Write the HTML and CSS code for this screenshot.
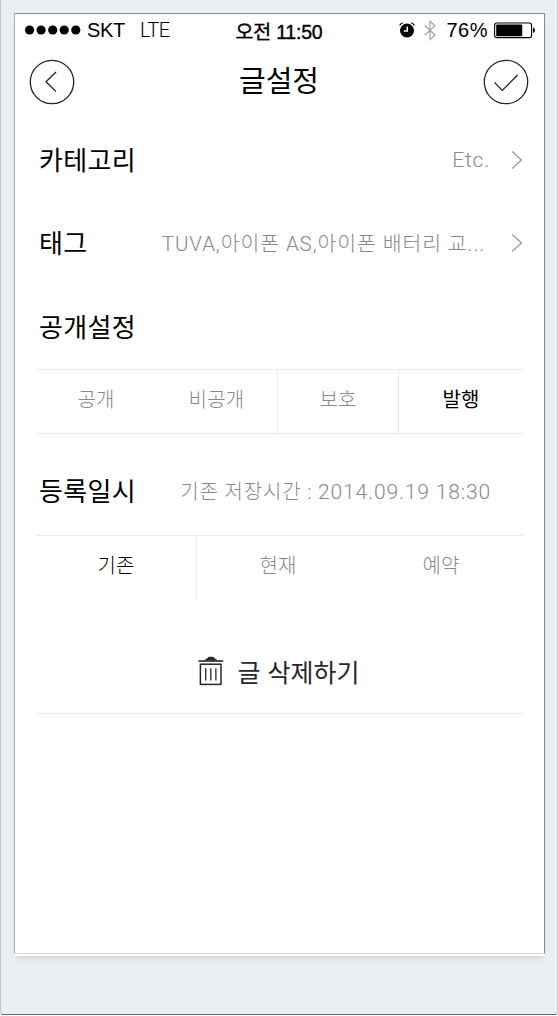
FILE: index.html
```
<!DOCTYPE html>
<html lang="ko">
<head>
    <meta charset="UTF-8">
    <meta name="viewport" content="width=device-width, initial-scale=1.0">
    <title>글설정</title>
    <link rel="stylesheet" href="styles.css">
</head>
<body>
    <div class="device">
        <div class="screen">
            <div class="status-bar">
                <div class="status-left">
                    <svg class="signal" width="56" height="10" viewBox="0 0 56 10">
                        <circle cx="4.6" cy="5" r="4.6"/>
                        <circle cx="16.1" cy="5" r="4.6"/>
                        <circle cx="27.7" cy="5" r="4.6"/>
                        <circle cx="39.2" cy="5" r="4.6"/>
                        <circle cx="50.8" cy="5" r="4.6"/>
                    </svg>
                    <span class="carrier">SKT</span>
                    <span class="network">LTE</span>
                </div>
                <div class="clock">오전 11:50</div>
                <div class="status-right">
                    <svg class="alarm" width="16" height="16" viewBox="0 0 16 16">
                        <circle cx="8" cy="8.6" r="7"/>
                        <path d="M0.6 3.6 Q1.6 1.6 3.8 0.8 M15.4 3.6 Q14.4 1.6 12.2 0.8" fill="none" stroke="#000" stroke-width="1.2"/>
                        <path d="M8.3 4.6 V9 H4.8" fill="none" stroke="#fff" stroke-width="1.5"/>
                    </svg>
                    <svg class="bluetooth" width="12" height="21" viewBox="0 0 12 21">
                        <path d="M0.7 5.5 L11 15 L6 19.6 V1.2 L11 5.8 L0.7 15.3" fill="none" stroke="#a5a5a5" stroke-width="1.2"/>
                    </svg>
                    <span class="percent">76%</span>
                    <svg class="battery" width="42" height="17" viewBox="0 0 42 17">
                        <rect x="0.6" y="1" width="37" height="14.6" rx="2.4" fill="#fff" stroke="#000" stroke-width="1.1"/>
                        <rect x="2.2" y="2.6" width="26" height="11.6" rx="1"/>
                        <path d="M39 5.6 Q41 6.4 41 8.4 Q41 10.3 39 11 Z"/>
                    </svg>
                </div>
            </div>

            <div class="header">
                <button class="round-btn" aria-label="뒤로">
                    <svg width="46" height="46" viewBox="0 0 46 46">
                        <circle cx="23" cy="23" r="21.7"/>
                        <path d="M27 13 L17 22.8 L27 32.6"/>
                    </svg>
                </button>
                <h1>글설정</h1>
                <button class="round-btn" aria-label="완료">
                    <svg width="46" height="46" viewBox="0 0 46 46">
                        <circle cx="23" cy="23" r="21.7"/>
                        <path d="M11.5 23.4 L19.3 31.4 L34.6 16"/>
                    </svg>
                </button>
            </div>

            <div class="row">
                <span class="label">카테고리</span>
                <span class="value etc">Etc.</span>
                <svg class="arrow" width="12" height="20" viewBox="0 0 12 20"><path d="M1.2 1.6 L10.4 10 L1.2 18.4"/></svg>
            </div>
            <div class="row">
                <span class="label">태그</span>
                <span class="value tags">TUVA,아이폰 AS,아이폰 배터리 교...</span>
                <svg class="arrow" width="12" height="20" viewBox="0 0 12 20"><path d="M1.2 1.6 L10.4 10 L1.2 18.4"/></svg>
            </div>
            <div class="row row-title">
                <span class="label">공개설정</span>
            </div>
            <div class="tabs tabs-open">
                <div class="tab">공개</div>
                <div class="tab">비공개</div>
                <div class="tab line">보호</div>
                <div class="tab line active bold">발행</div>
            </div>

            <div class="row row-date">
                <span class="label">등록일시</span>
                <span class="value date">기존 저장시간 : <span class="num">2014.09.19 18:30</span></span>
            </div>
            <div class="tabs tabs-date">
                <div class="tab active">기존</div>
                <div class="tab line">현재</div>
                <div class="tab">예약</div>
            </div>

            <div class="delete">
                <svg width="26" height="30" viewBox="0 0 26 30">
                    <path d="M6.5 4.6 Q7.4 3 9 2.6 Q9.6 0.8 11.4 0.8 H14.4 Q16.2 0.8 16.8 2.6 Q18.5 3 19.3 4.6 Z" fill="#24272c" stroke="none"/>
                    <path d="M0.5 5 H25.2" stroke-width="1.6"/>
                    <rect x="2.4" y="8.2" width="20.6" height="20.2" stroke-width="1.5"/>
                    <path d="M7.7 12.2 V24.4 M12.8 12.2 V24.4 M17.9 12.2 V24.4" stroke-width="1.3"/>
                </svg>
                <span>글 삭제하기</span>
            </div>
        </div>
    </div>
</body>
</html>
```
FILE: styles.css
```
:root {
    --frame: #ebeff2;
    --line: #ebebeb;
    --gray: #888;
}

* {
    box-sizing: border-box;
    margin: 0;
    padding: 0;
}

body {
    width: 558px;
    height: 1016px;
    overflow: hidden;
    background: #fff;
    font-family: "Liberation Sans", "Noto Sans CJK KR", sans-serif;
    color: #000;
}

.device {
    height: 1015px;
    padding: 13px 12px 61px 13px;
    background: var(--frame);
    border-left: 1px solid #c5c8ca;
    border-right: 1px solid #c9cccd;
    border-bottom: 1px solid #66696b;
    border-radius: 0 0 3px 3px;
}

.screen {
    height: 941px;
    background: #fff;
    border: 1px solid #85888a;
    border-left-color: #a9b0b0;
    border-bottom-color: #d5d7d8;
    box-shadow: 0 2px 0 #fcfcfc, 0 7px 6px -2px #d3d7da;
}

/* status bar */
.status-bar {
    display: grid;
    grid-template-columns: 1fr auto 1fr;
    align-items: center;
    height: 32px;
    padding: 0 8px 0 10px;
    font-size: 20px;
}

.status-left,
.status-right {
    display: flex;
    align-items: center;
    white-space: nowrap;
}

.status-right {
    justify-content: flex-end;
}

.carrier {
    margin-left: 6px;
    letter-spacing: -0.3px;
}

.network {
    margin-left: 15px;
    font-family: Roboto, sans-serif;
    font-weight: 300;
    letter-spacing: -0.5px;
}

.clock {
    padding-right: 3px;
    font-size: 19.5px;
    font-weight: 400;
    letter-spacing: -0.2px;
    -webkit-text-stroke: 0.4px #000;
}

.bluetooth {
    margin: 0 10px 0 9px;
}

.percent {
    margin-right: 6px;
    letter-spacing: 0.5px;
}

/* title */
.header {
    display: flex;
    justify-content: space-between;
    align-items: center;
    height: 72px;
    padding: 0 15px 0 14px;
}

.header h1 {
    font-size: 29px;
    font-weight: 400;
    line-height: 40px;
}

.round-btn {
    width: 46px;
    height: 46px;
    border: none;
    background: none;
}

.round-btn svg {
    display: block;
    fill: none;
    stroke: #222;
    stroke-width: 1.3;
}

/* settings */
.row {
    display: flex;
    align-items: center;
    height: 83px;
    padding: 1px 21px 0 24px;
}

.label {
    padding-top: 1px;
    font-size: 26px;
    line-height: 36px;
    letter-spacing: 0.3px;
}

.value {
    margin-left: auto;
    font-family: Roboto, "Noto Sans CJK KR", sans-serif;
    font-size: 20px;
    font-weight: 300;
    color: var(--gray);
    white-space: nowrap;
}

.etc {
    font-size: 21px;
    letter-spacing: 0.8px;
}

.tags {
    margin-right: 5px;
    padding-bottom: 2px;
    font-size: 20.5px;
    letter-spacing: 0.9px;
}

.arrow {
    margin-left: 21px;
    fill: none;
    stroke: #999;
    stroke-width: 1.3;
}

.row-title {
    height: 85px;
}

.row-date {
    height: 101px;
    padding: 14px 53px 0 24px;
}

.date {
    padding-bottom: 2px;
    letter-spacing: 0.85px;
}

.num {
    font-size: 21px;
    letter-spacing: 0.85px;
}

.tabs {
    display: grid;
    grid-template-columns: 120px 121px 121px 1fr;
    height: 65px;
    margin: 0 21px;
    border-top: 1px solid var(--line);
}

.tabs-open {
    border-bottom: 1px solid var(--line);
}

.tabs-date {
    grid-template-columns: 160px 163px 1fr;
}

.tab {
    display: flex;
    justify-content: center;
    align-items: center;
    padding-bottom: 6px;
    font-size: 20px;
    font-weight: 300;
    letter-spacing: 0.2px;
    color: var(--gray);
}

.tabs-date .tab {
    padding-bottom: 8px;
}

.tab.line {
    border-left: 1px solid var(--line);
}

.tab.active {
    color: #000;
}

.tab.bold {
    font-weight: 400;
}

.delete {
    display: flex;
    justify-content: center;
    align-items: center;
    gap: 14px;
    height: 114px;
    margin: 0 21px;
    padding: 28px 2px 0 0;
    border-bottom: 1px solid var(--line);
    color: #24272c;
    font-size: 25px;
}

.delete svg {
    fill: none;
    stroke: #24272c;
}
```
